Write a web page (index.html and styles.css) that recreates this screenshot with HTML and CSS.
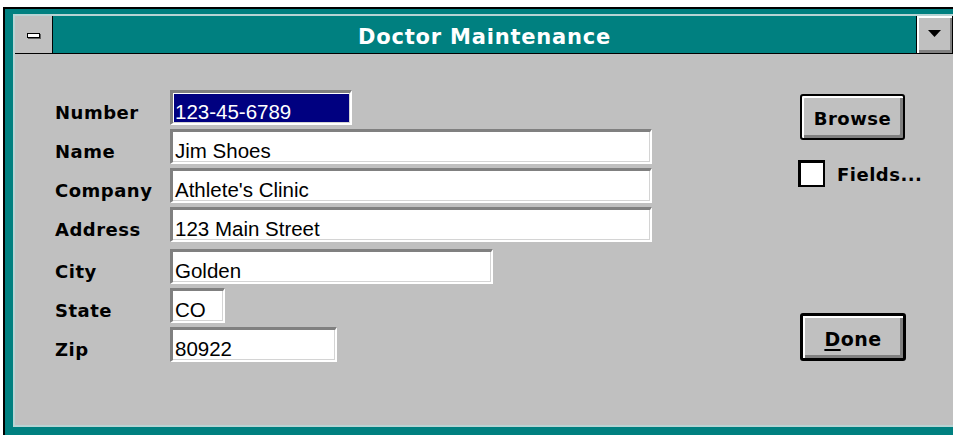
FILE: index.html
```html
<!DOCTYPE html>
<html lang="en">
<head>
<meta charset="utf-8">
<title>Doctor Maintenance</title>
<link rel="stylesheet" href="styles.css">
</head>
<body>
<div class="window">
  <div class="inner">
    <div class="titlebar">
      <div class="sysmenu"><span class="sysmenu-bar"></span></div>
      <div class="caption">Doctor Maintenance</div>
      <div class="dropbtn">
        <svg width="13" height="7" viewBox="0 0 13 7"><polygon points="0,0 13,0 6.5,7" fill="#000"/></svg>
      </div>
    </div>
    <div class="client">
      <form class="form">
        <div class="row">
          <label class="label">Number</label>
          <div class="field w-number"><span class="val selected">123-45-6789</span></div>
        </div>
        <div class="row">
          <label class="label">Name</label>
          <div class="field w-long"><span class="val">Jim Shoes</span></div>
        </div>
        <div class="row">
          <label class="label">Company</label>
          <div class="field w-long"><span class="val">Athlete's Clinic</span></div>
        </div>
        <div class="row">
          <label class="label">Address</label>
          <div class="field w-long"><span class="val">123 Main Street</span></div>
        </div>
        <div class="row row-sep">
          <label class="label">City</label>
          <div class="field w-city"><span class="val">Golden</span></div>
        </div>
        <div class="row">
          <label class="label">State</label>
          <div class="field w-state"><span class="val">CO</span></div>
        </div>
        <div class="row">
          <label class="label">Zip</label>
          <div class="field w-zip"><span class="val">80922</span></div>
        </div>
      </form>
      <div class="actions">
        <button class="btn btn-browse" type="button">Browse</button>
        <div class="check">
          <span class="checkbox"></span>
          <span class="check-label">Fields...</span>
        </div>
        <button class="btn btn-default" type="button"><u>D</u>one</button>
      </div>
    </div>
  </div>
</div>
</body>
</html>
```

FILE: styles.css
```css
html, body {
  margin: 0;
  padding: 0;
  width: 953px;
  height: 435px;
  overflow: hidden;
  background: #ffffff;
}

.window {
  margin: 7px 0 0 3px;
  width: 990px;
  height: 440px;
  border: 2px solid #000;
  border-right: none;
  background: #008080;
  padding: 5px 0 0 8px;
  box-sizing: border-box;
}

.inner {
  width: 938px;
  border: 2px solid #b8d4d4;
  border-right: none;
  background: #c0c0c0;
}

/* ---- title bar ---- */
.titlebar {
  display: flex;
  height: 37px;
  border-bottom: 1px solid #000;
}

.sysmenu {
  width: 37px;
  border-right: 1px solid #000;
  background: #c0c0c0;
  display: flex;
  align-items: center;
  justify-content: center;
}

.sysmenu-bar {
  width: 11px;
  height: 3px;
  background: #fff;
  border: 1px solid #000;
  box-shadow: 1px 1px 0 #606060;
  margin-top: 1px;
}

.caption {
  flex: 1;
  background: #008080;
  color: #fff;
  font-family: "DejaVu Sans", sans-serif;
  font-weight: bold;
  font-size: 21px;
  letter-spacing: 0.8px;
  text-align: center;
  line-height: 31px;
  padding-top: 6px;
}

.dropbtn {
  width: 35px;
  border-left: 1px solid #000;
  border-right: 1px solid #000;
  background: #c0c0c0;
  box-shadow: inset 2px 2px 0 #fff, inset -2px -3px 0 #808080;
  display: flex;
  align-items: center;
  justify-content: center;
}

.dropbtn svg {
  display: block;
  margin-bottom: 3px;
}

/* ---- client area ---- */
.client {
  display: grid;
  grid-template-columns: 785px 1fr;
  height: 371px;
  font-family: "DejaVu Sans", sans-serif;
  font-weight: bold;
  font-size: 18px;
  letter-spacing: 0.5px;
  color: #000;
}

.form {
  margin: 0;
  padding: 36px 0 0 40px;
  display: flex;
  flex-direction: column;
  gap: 4px;
}

.row {
  display: flex;
  align-items: flex-start;
}

.row-sep {
  margin-top: 3px;
}

.label {
  width: 115px;
  line-height: 20px;
  padding-top: 13px;
  flex: none;
}

.field {
  box-sizing: border-box;
  height: 35px;
  border-top: 3px solid #808080;
  border-left: 3px solid #808080;
  border-bottom: 2px solid #fff;
  border-right: 2px solid #fff;
  box-shadow: inset -1px -1px 0 #d4d4d4;
  background: #fff;
  padding: 1px 1px 1px 1px;
  font-family: "Liberation Sans", Arial, sans-serif;
  font-weight: normal;
  font-size: 20.5px;
  letter-spacing: 0;
}

.val {
  display: block;
  height: 20px;
  line-height: 20px;
  padding: 8px 2px 0 1px;
  white-space: nowrap;
  overflow: hidden;
}

.val.selected {
  background: #000080;
  color: #fff;
}

.w-number { width: 182px; }
.w-long { width: 482px; }
.w-city { width: 323px; }
.w-state { width: 55px; }
.w-zip { width: 167px; }

/* ---- buttons column ---- */
.actions {
  padding-top: 40px;
  display: flex;
  flex-direction: column;
  align-items: flex-start;
}

.btn {
  font: inherit;
  letter-spacing: inherit;
  color: #000;
  background: #c0c0c0;
  border-radius: 3px;
  padding: 3px 0 0;
  margin: 0;
  display: flex;
  align-items: center;
  justify-content: center;
  box-sizing: border-box;
}

.btn-browse {
  width: 105px;
  height: 46px;
  border: 2px solid #000;
  box-shadow: inset 2px 2px 0 #fff, inset -3px -3px 0 #808080;
}

.btn-default {
  width: 106px;
  height: 48px;
  margin-top: 126px;
  border: 3px solid #000;
  box-shadow: inset 2px 2px 0 #fff, inset -3px -3px 0 #808080;
  font-size: 19px;
}

.btn-default u {
  text-decoration-thickness: 2px;
  text-underline-offset: 3px;
}

.check {
  margin-top: 20px;
  margin-left: -2px;
  display: flex;
  align-items: center;
  gap: 12px;
}

.checkbox {
  box-sizing: border-box;
  width: 27px;
  height: 27px;
  background: #fff;
  border-top: 3px solid #000;
  border-left: 3px solid #000;
  border-bottom: 2px solid #000;
  border-right: 2px solid #000;
}

.check-label {
  padding-top: 2px;
}
```
